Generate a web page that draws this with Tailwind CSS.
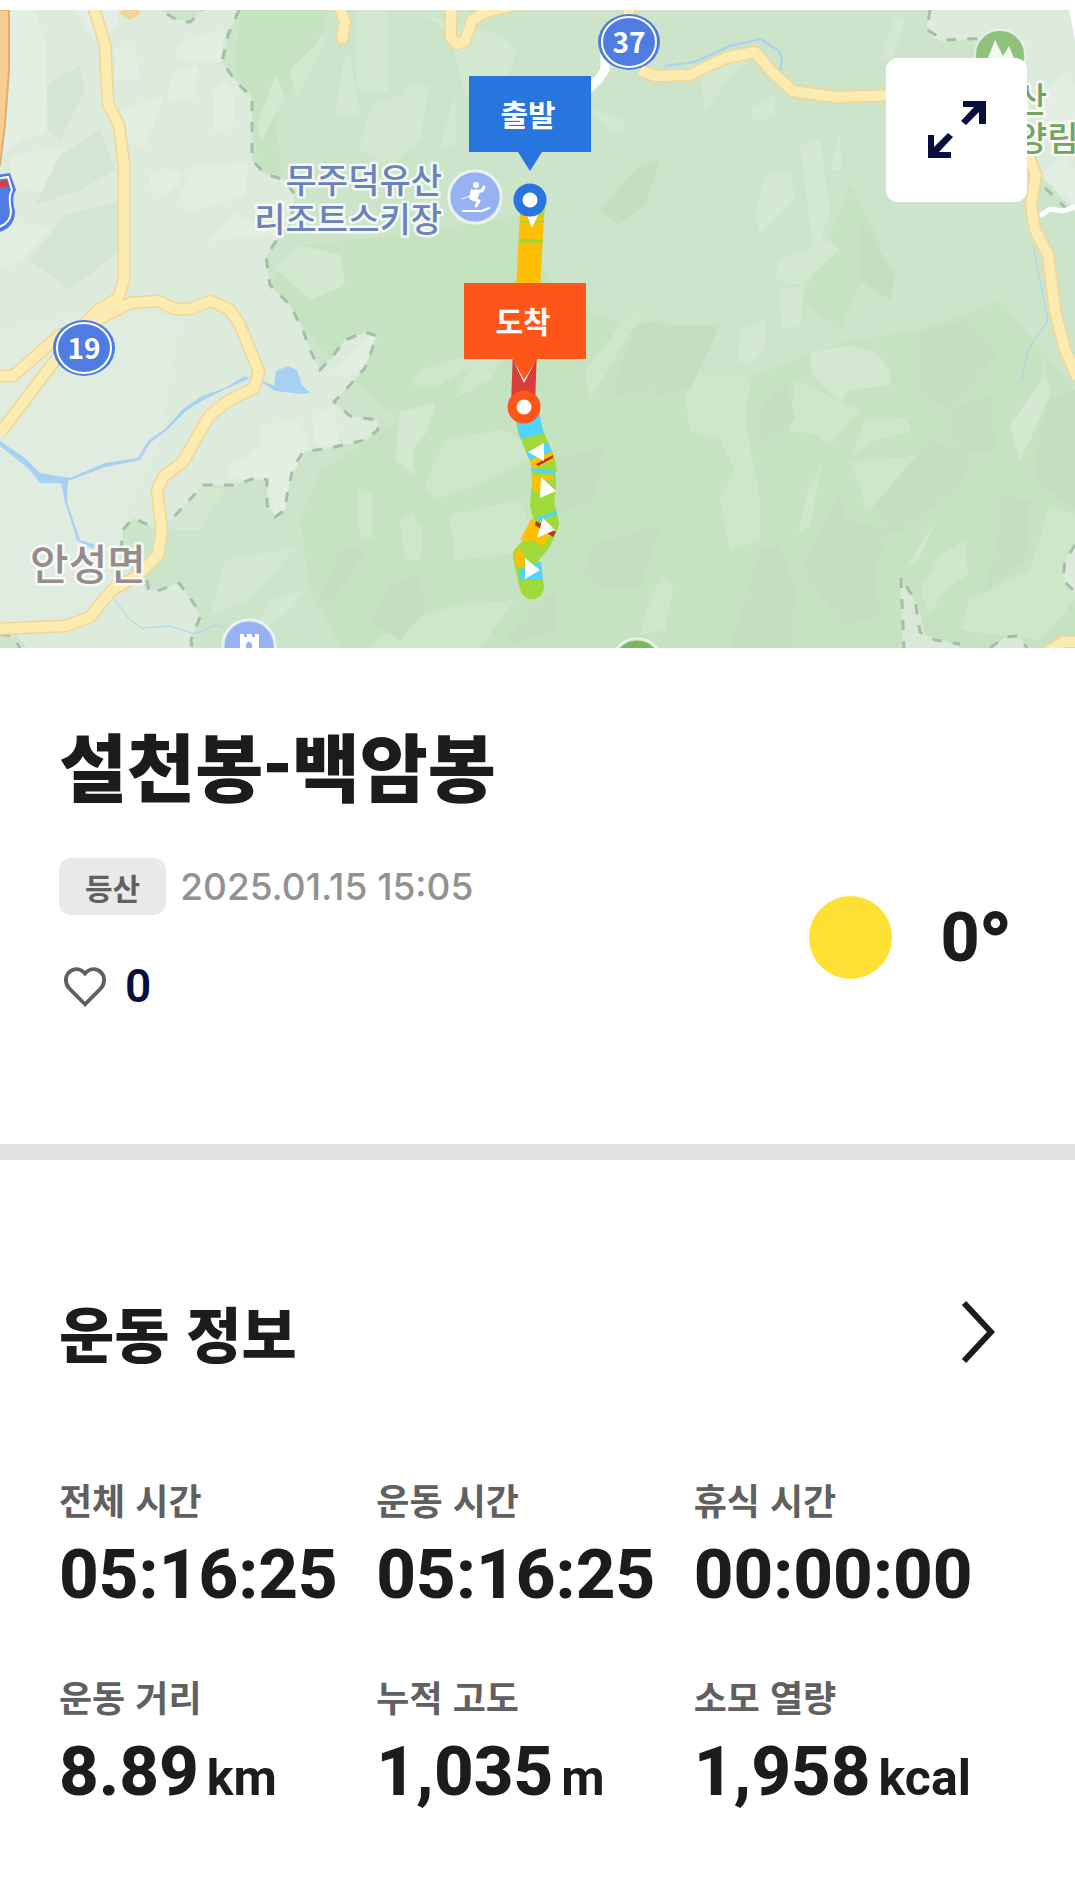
<!DOCTYPE html>
<html lang="ko">
  <head>
    <meta charset="UTF-8" />
    <meta name="viewport" content="width=device-width, initial-scale=1.0" />
    <title>설천봉-백암봉</title>
    <script src="https://cdn.jsdelivr.net/npm/@tailwindcss/browser@4"></script>
  </head>

  <body class="bg-white text-[#1c1c1c] font-['Noto_Sans_CJK_KR',sans-serif]">
    <main class="w-full">
      <section class="relative pt-[10px]">
        <svg
          class="block w-full h-auto"
          viewBox="0 10 1075 638"
          role="img"
          aria-label="설천봉-백암봉 지도"
        >
          <!-- park -->
          <rect y="10" width="1075" height="638" fill="#cce5ca" />
          <g fill="#c5e3c0">
            <path d="M270 285L300 245L400 235L520 215L560 300L640 330L700 395L850 340L920 330L1000 300L1075 390V648H340L310 590L300 520L320 470L400 420L330 360z" />
            <path d="M252 98L235 70L240 10H330L310 60L275 110L282 175L258 170z" />
            <path d="M820 260L850 185L880 240L840 330L800 300z" />
          </g>
          <g fill="#d3e9cf">
            <path d="M330 30L290 70L296 98L325 40z" />
            <path d="M345 55L335 115H360L350 55zM357 10H388V92L356 90z" />
            <path d="M275 75L257 125L262 140L285 95zM372 105L400 95L428 90L420 140L390 165L358 150z" />
            <path d="M300 245L275 268L310 300L345 285L340 255z" />
            <path d="M425 15L500 35L517 50L505 85L465 95L450 35zM405 85H428L415 148L400 145z" />
            <path d="M455 95L440 148L456 145zM588 108L625 120L622 133L610 132zM700 75L745 60L705 110z" />
            <path d="M203 485L225 490L200 530L160 530zM255 635L290 610L305 590L270 600z" />
            <path d="M295 548L225 560L210 615L250 600z" />
            <path d="M765 175L790 170L795 200L760 235L755 215zM800 145L820 140L830 210L815 260z" />
            <path d="M780 260L830 240L840 250L800 285L775 280zM780 290L805 285L800 325L782 330z" />
            <path d="M840 130L830 170H842zM752 108L775 95V118L752 120z" />
            <path d="M740 330L765 320V350L748 365L738 360z" />
            <path d="M810 352L850 345L875 352L890 370V385L850 390L840 402L812 375z" />
            <path d="M1040 345L1045 375L1010 425L1020 460L1030 440L1050 395z" />
            <path d="M936 520L908 565L918 560zM895 15L905 20L892 60L880 60z" />
            <path d="M400 412L435 403L428 430L412 452L415 475L395 460z" />
          </g>
          <g fill="#cde7c9">
            <path d="M445 440L500 430L530 440V460L490 480L435 500L425 485zM450 515L520 500L540 550L505 555L455 560z" />
            <path d="M375 640L400 625L455 605L515 600L480 648H370z" />
            <path d="M420 370L470 355L475 365L440 385L412 385zM480 350L510 345L490 380L455 398z" />
            <path d="M358 490L372 492V538H362L357 520zM400 520L412 512L423 530L420 560H405z" />
            <path d="M685 390L710 370L750 380L745 420L760 500V540L730 550L720 500L735 470L720 440L690 430z" />
            <path d="M663 575L673 590L665 630L640 635L650 600z" />
            <path d="M795 380L860 410L830 445L815 435L790 430z" />
            <path d="M850 462L925 455L930 470L890 505L865 510L862 490z" />
            <path d="M865 420L905 418L912 432L875 440L852 456z" />
            <path d="M822 465L808 490L798 535L810 525zM940 555L965 540L968 575L945 590L930 615L920 590z" />
            <path d="M970 600L1030 570L1050 505L1075 515V600L1040 640L960 630z" />
            <path d="M590 400L650 300L625 320L585 370z" />
          </g>
          <g fill="#c3dfbf">
            <path d="M635 325L665 320L655 390L612 395z" />
            <path d="M860 220L895 275L890 300L860 280z" />
            <path d="M760 410L785 380L795 420L762 445z" />
            <path d="M555 460L603 447L595 500L550 515z" />
            <path d="M592 545L660 525L640 590H600L585 575z" />
            <path d="M665 325H720L690 390L655 395zM920 330L970 320L1000 350L950 410L918 395z" />
            <path d="M950 410L990 395L995 450L955 455zM930 440L975 460L955 490L895 535L870 510z" />
            <path d="M760 550L780 545L795 590L790 648H730zM840 490L845 520L890 530L875 570L880 615L845 625L800 570z" />
            <path d="M1000 495L1030 500L1025 560L985 590L998 540zM1050 400L1075 390V510L1035 480L1040 430z" />
            <path d="M530 610L555 590L557 630L500 648z" />
            <path d="M340 550L370 545L330 605L320 600zM390 585L420 575L425 610L400 640L370 620z" />
            <path d="M635 170L660 160L645 205L618 225L600 210z" />
          </g>
          <!-- lowland -->
          <path
            d="M0 10H239L228 35L222 62L235 80L252 98V160L265 174L285 180L295 195L290 225L277 240L266 256L270 285L290 305L302 328L310 350L320 370L332 357L345 340L365 332L377 336L365 368L350 385L334 402L350 416L377 420L378 430L365 440L330 448L303 452L293 468L287 495L285 510L275 517L267 505V480L258 477L235 485H203L185 505L167 524L155 528L133 518L123 530L121 560L147 590L160 590L179 583L195 605L200 617L191 640L192 648H0z"
            fill="#dcebdb"
          />
          <path d="M0 330L100 310L180 320L160 440L120 520L110 600L0 630z" fill="#e0ece0" />
          <g fill="#e4efe3">
            <path d="M8 10H35L45 40L47 132L20 140L0 160V100z" />
            <path d="M115 48L135 47L140 80L115 80zM173 72L198 65L195 97L167 102z" />
            <path d="M175 50L190 38L225 30L220 62L178 60zM214 92L225 82L235 95L232 128L214 130z" />
            <path d="M120 110L164 96L145 148L122 140zM10 155L62 148L50 188L35 192L12 180z" />
            <path d="M150 175L165 168L182 172L178 185L162 196L151 190z" />
            <path d="M195 165L248 163L245 195L188 212L180 195zM207 241L235 213L280 235z" />
            <path d="M0 222L52 226L25 258L0 270zM75 10H118V25L95 40z" />
            <path d="M260 426L297 420L310 440L290 480L285 510L275 517L267 480L228 478V468L262 445z" />
            <path d="M332 375L365 338L375 336L365 365L350 376zM335 404L312 418L315 445L338 447z" />
          </g>
          <g fill="#d5e5d4">
            <path d="M47 85L80 65L85 90L60 140L48 130zM60 155L100 130L115 170L80 190L35 205z" />
            <path d="M30 260L65 215L125 200L120 250L70 290z" />
          </g>
          <path d="M163 10H203L190 22L170 18zM0 634L15 636L20 648H0z" fill="#cce5ca" />
          <path
            d="M930 10L927 25L933 38L945 42L978 38L1010 120L1035 170L1075 212V40L1069 10z"
            fill="#dcebdb"
          />
          <path d="M1069 10H1075V40z" fill="#fff" />
          <path d="M1045 90L1062 75L1075 85V130H1040zM1040 175L1065 155L1075 170V205z" fill="#e4efe3" />
          <path d="M900 580L903 648H960L950 642L925 635L918 605zM990 648L1005 637L1018 636L1027 648z" fill="#dae8d9" />
          <path d="M1075 545L1065 560L1063 580L1075 592z" fill="#dcebdb" />

          <g fill="none" stroke="#a3bfa5" stroke-width="3" stroke-dasharray="10 11">
            <path d="M239 10L228 35L222 62L235 80L252 98V160L265 174L285 180L295 195L290 225L277 240L266 256L270 285L290 305L302 328L310 350L320 370L332 357L345 340L365 332L377 336L365 368L350 385L334 402L350 416L377 420L378 430L365 440L330 448L303 452L293 468L287 495L285 510L275 517L267 505V480L258 477L235 485H203L185 505L167 524L155 528L133 518L123 530L121 550" />
            <path d="M147 580L149 592L160 590L179 583L195 605L200 617L191 640L192 648M167 14L180 22L190 22L203 10" />
            <path d="M930 10L927 30L945 40L985 38M1045 188L1075 217M0 634L13 636L20 648" />
            <path d="M901 578L904 648M906 586L915 600L920 632L935 640L960 644M990 648L1005 637L1018 636L1027 648M1075 545L1065 560L1063 580L1075 592" />
          </g>

          <!-- water -->
          <g fill="#a6d1f3">
            <path d="M276 371L288 366L297 370L302 385L310 393L302 394L275 391L262 382L263 381L274 386z" />
            <path d="M0 441L25 458L40 473L70 478L105 463L138 458L148 441L165 429L183 409L202 396L225 388L245 376L250 378L228 388L203 400L186 411L168 429L150 443L140 460L105 467L68 481L67 502L80 540L95 545L93 549L77 540L65 502L61 483L40 483L28 468L0 446z" />
          </g>
          <g fill="none" stroke="#a6d1f3" stroke-width="2">
            <path d="M115 600L130 620L142 628L170 626L195 634L215 625L225 628M15 635L25 648" stroke-width="1" />
            <path d="M665 66L695 62L730 46L760 39L778 50L782 58L780 72" />
            <path d="M1033 245L1042 290L1048 320L1028 350L1022 380" stroke-width="1" />
          </g>

          <!-- roads -->
          <path d="M-4 10H9V70L5 125L0 165H-4z" fill="#f7cd93" stroke="#e3ad70" stroke-width="2" />
          <g fill="none" stroke-linejoin="round">
            <g stroke="#f2d596" stroke-width="13">
              <path d="M94 8L105 45L108 104L119 125L124 165V280L118 298L98 310L84 325L50 367L0 433" />
              <path d="M-4 376H13L60 335L84 327L130 303L158 301L175 309H190L211 301L230 310L240 325L259 372L254 388L228 401L209 416L183 462L164 476L157 490L162 530L158 555L137 576L112 590L90 617L66 626L-4 629" />
              <path d="M451 8V38L457 44L465 41L472 20L483 13L510 6M340 8L345 22L342 38" stroke-linecap="round" />
              <path d="M629 8V30M640 70L655 76L690 75L725 58L755 52L772 72L793 91L835 97L900 95" />
              <path d="M1028 155L1036 175L1031 205L1035 230L1048 255L1055 310L1065 350L1078 378M1048 652L1063 642H1078M124 8L130 13L137 8" />
            </g>
            <g stroke="#fdecb1" stroke-width="10">
              <path d="M94 8L105 45L108 104L119 125L124 165V280L118 298L98 310L84 325L50 367L0 433" />
              <path d="M-4 376H13L60 335L84 327L130 303L158 301L175 309H190L211 301L230 310L240 325L259 372L254 388L228 401L209 416L183 462L164 476L157 490L162 530L158 555L137 576L112 590L90 617L66 626L-4 629" />
              <path d="M451 8V38L457 44L465 41L472 20L483 13L510 6M340 8L345 22L342 38" stroke-linecap="round" />
              <path d="M629 8V30M640 70L655 76L690 75L725 58L755 52L772 72L793 91L835 97L900 95" />
              <path d="M1028 155L1036 175L1031 205L1035 230L1048 255L1055 310L1065 350L1078 378M1048 652L1063 642H1078" />
            </g>
            <path d="M605 50V70L598 80L585 92" stroke="#fff" stroke-width="9" />
            <path d="M1040 216L1050 209L1063 211L1078 206" stroke="#fff" stroke-width="5" />
          </g>

          <!-- route shields -->
          <g font-size="28" font-weight="700" fill="#fff" text-anchor="middle">
            <ellipse cx="84" cy="348" rx="31" ry="28" fill="#4f7ce3" />
            <ellipse cx="84" cy="348" rx="27" ry="25" fill="none" stroke="#fff" stroke-width="2" />
            <text x="84" y="359">19</text>
            <ellipse cx="629" cy="42" rx="31" ry="28" fill="#4f7ce3" />
            <ellipse cx="629" cy="42" rx="27" ry="25" fill="none" stroke="#fff" stroke-width="2" />
            <text x="629" y="53">37</text>
          </g>
          <path d="M-4 175L10 173L16 190Q11 197 15 211Q15 229 -4 233z" fill="#4f7ce3" />
          <path d="M-4 179L8 177L12 190Q8 196 11 211Q11 224 -4 228" fill="none" stroke="#fff" stroke-width="2" />
          <path d="M-4 182L7 180L9 186L-4 188z" fill="#e23b35" />

          <!-- place names -->
          <g font-weight="500" stroke="#fff" stroke-opacity=".8" stroke-width="5" stroke-linejoin="round" paint-order="stroke">
            <g fill="#6a83bd" font-size="34" text-anchor="end">
              <text x="442" y="193">무주덕유산</text>
              <text x="442" y="232">리조트스키장</text>
            </g>
            <text x="30" y="580" fill="#958d8c" font-size="42">안성면</text>
            <g fill="#74a45f" font-size="34">
              <text x="1016" y="112">산</text>
              <text x="1016" y="151">양림</text>
            </g>
          </g>

          <!-- ski resort -->
          <circle cx="475" cy="197" r="26" fill="#96b2f2" stroke="#fff" stroke-opacity=".7" stroke-width="3" />
          <g fill="none" stroke="#fff" stroke-width="3" stroke-linecap="round" stroke-linejoin="round">
            <path d="M463 211H482L489 208" stroke-width="2" />
            <path d="M472 199L479 201L476 206M475 191L482 191L484 187" />
            <path d="M473 195L462 199" stroke-width="1" />
          </g>
          <path d="M471 189L480 192L477 200L469 199z" fill="#fff" />
          <circle cx="476" cy="185" r="3" fill="#fff" />

          <!-- castle -->
          <circle cx="249" cy="646" r="26" fill="#96b2f2" stroke="#fff" stroke-opacity=".7" stroke-width="3" />
          <path d="M240 634H244V637H247V634H252V637H255V634H259V650H252V644Q249 639 246 644V650H240z" fill="#fff" />

          <circle cx="637" cy="664" r="25" fill="#7bb662" stroke="#fff" stroke-opacity=".7" stroke-width="3" />
          <circle cx="1000" cy="55" r="25" fill="#8fc27c" stroke="#fff" stroke-opacity=".6" stroke-width="2" />
          <path d="M984 68L995 40L1003 56L1009 46L1018 68z" fill="#f3f8f1" />

          <!-- track -->
          <g fill="none" stroke-width="24">
            <path d="M533 205L532 218" stroke="#a0d93a" stroke-linecap="round" />
            <path d="M532 216L528 290" stroke="#ffbf05" />
            <path d="M531 239L531 243M532 221L532 223" stroke="#a9d52f" />
            <path d="M525 350L523 405" stroke="#d93d38" />
            <path d="M525 407L530 430L543 461L544 485L542 505L547 523L540 540L525 556L532 587" stroke="#a0d93a" stroke-linecap="round" stroke-linejoin="round" />
            <path d="M527 410L529 423L532 436M537 447L541 456" stroke="#4fd3ff" />
            <path d="M541 456L544 464M542 524L531 545" stroke="#ffbf05" />
          </g>
          <path d="M532 475H553V480L541 478V492H533z" fill="#ffbf05" />
          <path d="M544 466L555 460L557 472L544 470zM532 540L548 549L538 561L519 545z" fill="#a0d93a" />
          <path d="M519 547L514 556L517 566L524 567L523 553z" fill="#ffbf05" />
          <path d="M531 468L555 471V475L531 471zM537 517L557 511V514L538 521zM519 570L541 562L543 580H520z" fill="#4fd3ff" />
          <path d="M536 464L553 455L553 458L538 466zM536 521L556 532L553 537L535 525z" fill="#b2372c" />
          <g fill="#fff">
            <path d="M526 213H539L532 228zM514 362L524 378L535 362L524 383z" />
            <path d="M528 452L544 443V461zM541 477L556 491L540 498zM543 518L555 530L537 538zM525 558L540 570L525 579z" />
          </g>

          <!-- start and finish markers -->
          <path d="M469 76H591V152H542L530 171L518 152H469z" fill="#2975df" />
          <circle cx="530" cy="200" r="12" fill="#fff" stroke="#2975df" stroke-width="9" />
          <path d="M464 283H586V359H537L524 380L513 359H464z" fill="#ff5519" />
          <circle cx="524" cy="407" r="12" fill="#fff" stroke="#ff5519" stroke-width="9" />
          <g font-size="30" font-weight="700" fill="#fff" text-anchor="middle">
            <text x="528" y="126">출발</text>
            <text x="523" y="333">도착</text>
          </g>
        </svg>

        <button
          type="button"
          aria-label="지도 크게 보기"
          class="absolute top-[58px] right-12 w-[141px] h-36 rounded-xl bg-white flex items-center justify-center"
        >
          <svg class="w-[60px] h-[60px]" viewBox="0 1 60 60" fill="#070f41">
            <path d="M36 2H59V25H52V13L39 26L34 22L47 8H36z" />
            <path d="M24 59H1V36H7V48L21 34L26 38L12 53H24z" />
          </svg>
        </button>
      </section>

      <section class="pt-17 pb-32 pl-[59px] pr-16 border-b-16 border-[#e2e2e2]">
        <h1 class="text-[74px] leading-[96px] font-black">설천봉-백암봉</h1>
        <div class="mt-[46px] flex items-center justify-between">
          <div>
            <div class="flex items-center gap-[14px]">
              <span
                class="h-[57px] px-[26px] rounded-xl bg-[#e9e9e9] flex items-center text-[30px] leading-none font-bold text-[#606060]"
                >등산</span
              >
              <time
                datetime="2025-01-15T15:05"
                class="font-[Inter,sans-serif] text-[37px] leading-none font-medium text-[#929292]"
                >2025.01.15 15:05</time
              >
            </div>
            <button type="button" aria-label="좋아요" class="mt-[41px] h-15 pl-[2px] flex items-center gap-4">
              <svg class="w-12 h-12" viewBox="0 0 50 50" fill="none" stroke="#606060" stroke-width="4">
                <path d="M25 44L9 28C4 23 4 15 8 11C13 6 20 6 25 12C30 6 37 6 42 11C46 15 46 23 41 28z" />
              </svg>
              <span class="font-[Roboto,sans-serif] text-[46px] leading-none font-semibold text-[#070f41]">0</span>
            </button>
          </div>
          <div class="flex items-center gap-12">
            <span class="w-[83px] h-[83px] rounded-full bg-[#ffe135]"></span>
            <span class="font-[Roboto,sans-serif] text-[68px] leading-none font-extrabold"
              >0<span class="font-[Inter,sans-serif]">°</span></span
            >
          </div>
        </div>
      </section>

      <section class="pt-[124px] pb-16 pl-[59px] pr-16">
        <header class="flex items-center justify-between">
          <h2 class="text-[60px] leading-[96px] font-black">운동 정보</h2>
          <a href="#" aria-label="운동 정보 더보기" class="pr-4">
            <svg class="w-[34px] h-16" viewBox="0 0 34 64" fill="none" stroke="#1c1c1c" stroke-width="6">
              <path d="M3 3L30 32L3 61" />
            </svg>
          </a>
        </header>

        <dl class="mt-[95px] grid grid-cols-3 gap-y-[45px] whitespace-nowrap">
          <div>
            <dt class="text-[36px] leading-[48px] font-bold text-[#606060]">전체 시간</dt>
            <dd class="font-[Roboto,sans-serif] text-[69px] leading-[104px] font-extrabold">05:16:25</dd>
          </div>
          <div>
            <dt class="text-[36px] leading-[48px] font-bold text-[#606060]">운동 시간</dt>
            <dd class="font-[Roboto,sans-serif] text-[69px] leading-[104px] font-extrabold">05:16:25</dd>
          </div>
          <div>
            <dt class="text-[36px] leading-[48px] font-bold text-[#606060]">휴식 시간</dt>
            <dd class="font-[Roboto,sans-serif] text-[69px] leading-[104px] font-extrabold">00:00:00</dd>
          </div>
          <div>
            <dt class="text-[36px] leading-[48px] font-bold text-[#606060]">운동 거리</dt>
            <dd class="font-[Roboto,sans-serif] text-[69px] leading-[104px] font-extrabold">
              8.89<span class="ml-2 text-[50px] leading-none font-bold">km</span>
            </dd>
          </div>
          <div>
            <dt class="text-[36px] leading-[48px] font-bold text-[#606060]">누적 고도</dt>
            <dd class="font-[Roboto,sans-serif] text-[69px] leading-[104px] font-extrabold">
              1,035<span class="ml-2 text-[50px] leading-none font-bold">m</span>
            </dd>
          </div>
          <div>
            <dt class="text-[36px] leading-[48px] font-bold text-[#606060]">소모 열량</dt>
            <dd class="font-[Roboto,sans-serif] text-[69px] leading-[104px] font-extrabold">
              1,958<span class="ml-2 text-[50px] leading-none font-bold">kcal</span>
            </dd>
          </div>
        </dl>
      </section>
    </main>
  </body>
</html>
